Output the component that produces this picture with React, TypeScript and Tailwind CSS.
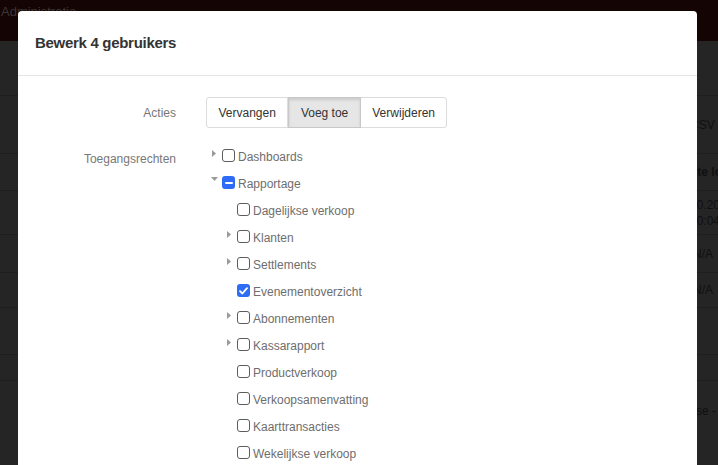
import React from 'react';

type Item = { label: string; level: number; caret?: 'right' | 'down'; state?: 'on' | 'off' | 'mixed' };

const items: Item[] = [
    { label: 'Dashboards', level: 0, caret: 'right' },
    { label: 'Rapportage', level: 0, caret: 'down', state: 'mixed' },
    { label: 'Dagelijkse verkoop', level: 1 },
    { label: 'Klanten', level: 1, caret: 'right' },
    { label: 'Settlements', level: 1, caret: 'right' },
    { label: 'Evenementoverzicht', level: 1, state: 'on' },
    { label: 'Abonnementen', level: 1, caret: 'right' },
    { label: 'Kassarapport', level: 1, caret: 'right' },
    { label: 'Productverkoop', level: 1 },
    { label: 'Verkoopsamenvatting', level: 1 },
    { label: 'Kaarttransacties', level: 1 },
    { label: 'Wekelijkse verkoop', level: 1 },
];

function Caret({ dir }: { dir?: 'right' | 'down' }) {
    if (!dir) return null;
    if (dir === 'right') {
        return (
            <svg width="4" height="7" viewBox="0 0 4 7" className="mt-[-4px]">
                <path d="M0 0 L4 3.5 L0 7 Z" fill="#9a9a9a" />
            </svg>
        );
    }
    return (
        <svg width="7" height="4" viewBox="0 0 7 4" className="mt-[-6px]">
            <path d="M0 0 L7 0 L3.5 4 Z" fill="#9a9a9a" />
        </svg>
    );
}

function Check({ state = 'off' }: { state?: 'on' | 'off' | 'mixed' }) {
    if (state === 'off') {
        return <span className="w-[13px] h-[13px] rounded-[3px] border border-[#5c5c5c] bg-white shrink-0" />;
    }
    return (
        <span className="w-[13px] h-[13px] rounded-[3px] bg-[#2f6cf6] shrink-0 flex items-center justify-center">
            {state === 'on' ? (
                <svg width="9" height="8" viewBox="0 0 9 8">
                    <path d="M1 4.2 L3.4 6.5 L8 1.2" stroke="white" strokeWidth="1.8" fill="none" strokeLinecap="round" strokeLinejoin="round" />
                </svg>
            ) : (
                <span className="w-[8px] h-[2px] bg-white rounded-[1px]" />
            )}
        </span>
    );
}

export default function App() {
    // rows of the page behind the dimmed overlay; only their right edge peeks out
    const bgRows = [
        { h: 58, text: 'CSV', cls: 'pl-[690px]' },
        { h: 37, text: 'Laatste login', cls: 'pl-[666px] font-bold' },
        { h: 44, text: '10.2019\n10:04', cls: 'pl-[690px]' },
        { h: 38, text: 'N/A', cls: 'pl-[693px]' },
        { h: 35, text: 'N/A', cls: 'pl-[693px]' },
        { h: 47, text: '', cls: '' },
        { h: 26, text: '', cls: '' },
        { h: 60, text: 'Verkoopse -', cls: 'pl-[652px]' },
    ];

    return (
        <div className="w-[718px] h-[465px] relative overflow-hidden bg-[#252525] font-['Liberation_Sans',Arial,sans-serif]">
            <div className="h-[41px] bg-[#140404] px-[1px] pt-[2px] text-[13px] text-[#3d3535]">Administratie</div>
            <div className="h-[54px]" />
            {bgRows.map((r, i) => (
                <div key={i} style={{ height: r.h }} className={`border-t border-[#1e1e1e] flex items-center text-[12px] text-[#101010] whitespace-pre leading-[16px] ${r.cls}`}>
                    {r.text}
                </div>
            ))}

            {/* modal */}
            <div className="absolute left-[18px] top-[11px] w-[679px] h-[480px] bg-white rounded-t-[4px]">
                <div className="h-[65px] border-b border-[#e5e5e5] flex items-center px-[17px]">
                    <h2 className="text-[15px] font-bold text-[#333] tracking-[-0.3px]">Bewerk 4 gebruikers</h2>
                </div>

                <div className="pt-[21px] text-[12px]">
                    <div className="flex items-center">
                        <div className="w-[158px] text-right text-[#777]">Acties</div>
                        <div className="ml-[30px] flex rounded-[3px] border border-[#dcdcdc] text-[#333] h-[31px]">
                            <div className="px-[11.5px] flex items-center border-r border-[#dcdcdc]">Vervangen</div>
                            <div className="px-[11.5px] flex items-center bg-[#e6e6e6] border border-[#c8c8c8] shadow-[inset_0_2px_3px_rgba(0,0,0,0.12)] -my-px">Voeg toe</div>
                            <div className="px-[11.5px] flex items-center">Verwijderen</div>
                        </div>
                    </div>

                    <div className="flex mt-[14px]">
                        <div className="w-[158px] text-right text-[#777] pt-[8px]">Toegangsrechten</div>
                        <div className="ml-[30px] flex flex-col">
                            {items.map((it) => (
                                <div key={it.label} className="h-[27px] flex items-center" style={{ paddingLeft: it.level * 15 }}>
                                    <div className="w-[16px] flex justify-center">
                                        <Caret dir={it.caret} />
                                    </div>
                                    <Check state={it.state} />
                                    <span className="ml-[3px] text-[#6e6e6e] mt-[2px]">{it.label}</span>
                                </div>
                            ))}
                        </div>
                    </div>
                </div>
            </div>
        </div>
    );
}
